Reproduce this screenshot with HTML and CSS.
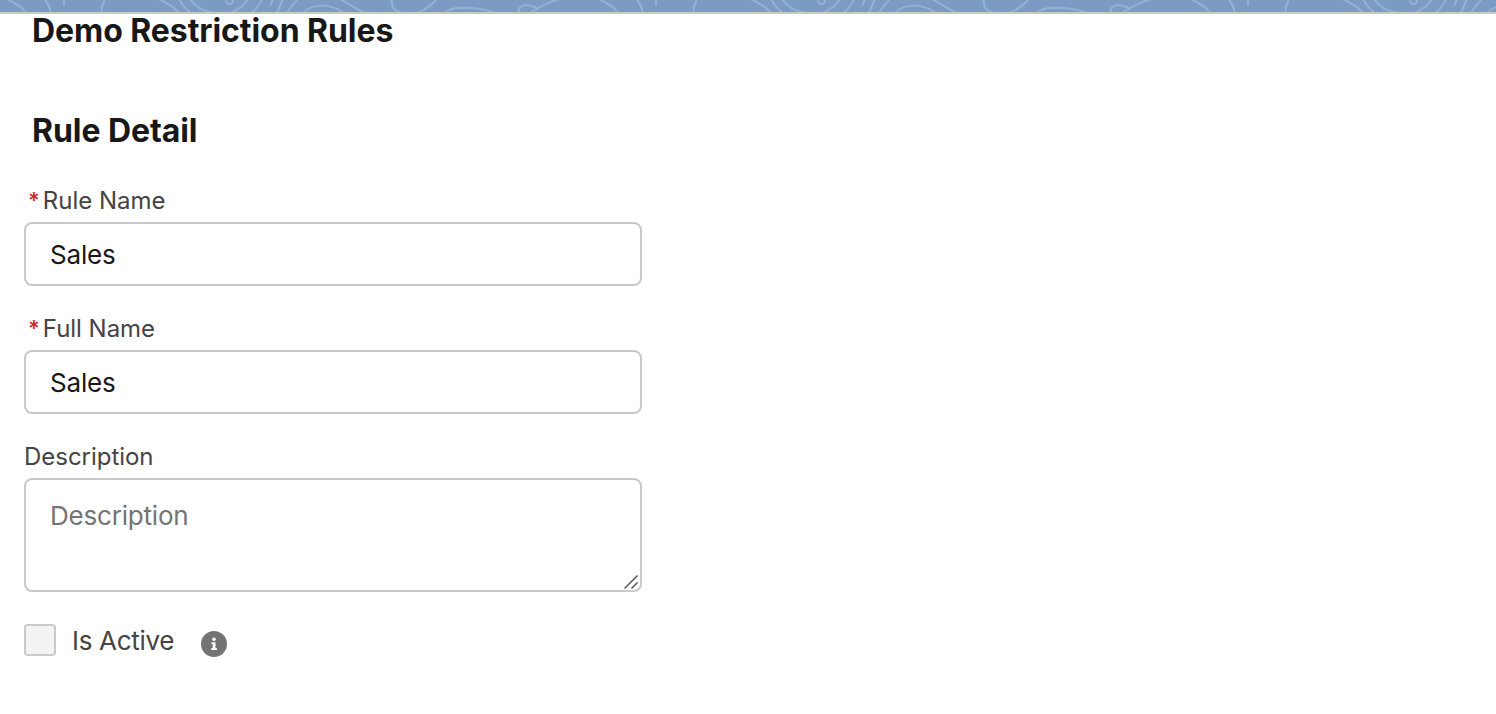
FILE: index.html
```html
<!DOCTYPE html>
<html lang="en">
<head>
    <meta charset="UTF-8">
    <meta name="viewport" content="width=device-width, initial-scale=1.0">
    <title>Demo Restriction Rules</title>
    <link rel="stylesheet" href="styles.css">
</head>
<body>
    <header class="banner">
        <svg width="100%" height="12" aria-hidden="true">
            <defs>
                <pattern id="contours" width="592" height="12" patternUnits="userSpaceOnUse">
                    <g fill="none" stroke="#95afd3" stroke-width="2.2">
                        <path d="M7 -1Q20 5 26 13M45 -1Q49 5 51 13M64 -1V5.5M105 -1Q102 5 101 13"/>
                        <path d="M159 -1Q175 7 179 13M179 -1Q183 7 191 13M190 -1Q200 12 214 12.500M232 12.500Q242 8 248 -1"/>
                        <path d="M226 -1C226 6 233 6 233 -1M262 -1Q258 8 251 13M273 -1L270 6M283 -1L277 13M298 -1Q291 6 287 13"/>
                        <path d="M303 13C313 3 330 3 344 13M340 -1L364 13M392 -1C391 9 395 11 402 13M417 13Q428 9 437 -1"/>
                        <path d="M445 13C454 5 478 7 496 13M519 13C517 4 528 3 538 9M530 13Q543 4 559 -1"/>
                    </g>
                </pattern>
            </defs>
            <rect width="100%" height="12" fill="url(#contours)"/>
        </svg>
    </header>
    <main>
        <h1>Demo Restriction Rules</h1>
        <h2>Rule Detail</h2>
        <form class="rule-form">
            <div class="field">
                <label for="rule-name"><span class="required">*</span>Rule Name</label>
                <input type="text" id="rule-name" value="Sales">
            </div>
            <div class="field">
                <label for="full-name"><span class="required">*</span>Full Name</label>
                <input type="text" id="full-name" value="Sales">
            </div>
            <div class="field">
                <label for="description">Description</label>
                <div class="textarea-wrap">
                    <textarea id="description" placeholder="Description"></textarea>
                    <svg class="grip" width="16" height="16" viewBox="0 0 16 16" aria-hidden="true">
                        <path d="M1.500 14.500L14.500 1.500M8.500 14.500L14.500 8.500" stroke="#555" stroke-width="1.500"/>
                    </svg>
                </div>
            </div>
            <div class="active-row">
                <input type="checkbox" id="is-active">
                <label for="is-active">Is Active</label>
                <svg class="info" width="26" height="26" viewBox="0 0 26 26" aria-hidden="true">
                    <circle cx="13" cy="13" r="13" fill="#747474"/>
                    <circle cx="13" cy="8.200" r="1.800" fill="#fff"/>
                    <path d="M10.500 11.200H14.500V17.200H16V19H10.200V17.200H11.700V13H10.500Z" fill="#fff"/>
                </svg>
            </div>
        </form>
    </main>
</body>
</html>
```
FILE: styles.css
```css
* {
    box-sizing: border-box;
}
body {
    margin: 0;
    background: #fff;
    color: #181818;
    font-family: Inter, sans-serif;
}
.banner {
    height: 14px;
    background: #7b9ac4;
    border-bottom: 2px solid #c9c9c9;
}
.banner svg {
    display: block;
}
main {
    padding: 0 24px 40px;
}
h1,
h2 {
    margin: 0;
    padding-left: 8px;
    font-size: 32px;
    line-height: 40px;
    font-weight: 700;
    letter-spacing: -0.07px;
}
h1 {
    margin-top: -3px;
}
h2 {
    margin-top: 60px;
}
.rule-form {
    width: 618px;
    margin-top: 31px;
}
.field {
    margin-bottom: 24px;
}
.field label {
    display: block;
    height: 36px;
    margin-bottom: 3px;
    padding-top: 1px;
    line-height: 36px;
    font-size: 24px;
    letter-spacing: -0.03px;
    color: #444;
}
.field input,
.textarea-wrap {
    margin-top: 4px;
}
.required {
    margin: 0 3px 0 4px;
    font-size: 22px;
    font-weight: 600;
    line-height: 1;
    vertical-align: 1px;
    color: #d9262b;
}
input[type="text"],
textarea {
    display: block;
    width: 100%;
    padding: 0 24px;
    border: 2px solid #c9c9c9;
    border-radius: 8px;
    background: #fff;
    color: #181818;
    font-family: inherit;
    font-size: 26px;
    letter-spacing: -0.2px;
}
input[type="text"] {
    height: 64px;
}
textarea {
    height: 114px;
    padding-top: 16px;
    line-height: 40px;
    resize: none;
}
textarea::placeholder {
    color: #747474;
}
.textarea-wrap {
    position: relative;
}
.grip {
    position: absolute;
    right: 3px;
    bottom: 2px;
}
.active-row {
    display: flex;
    align-items: center;
    height: 32px;
    margin-top: 32px;
    font-size: 26px;
    letter-spacing: -0.3px;
    color: #444;
}
.active-row input {
    appearance: none;
    width: 32px;
    height: 32px;
    margin: 0 16px 0 0;
    border: 2px solid #c9c9c9;
    border-radius: 4px;
    background: #f3f3f3;
}
.info {
    margin: 8px 0 0 27px;
    overflow: visible;
}
```
